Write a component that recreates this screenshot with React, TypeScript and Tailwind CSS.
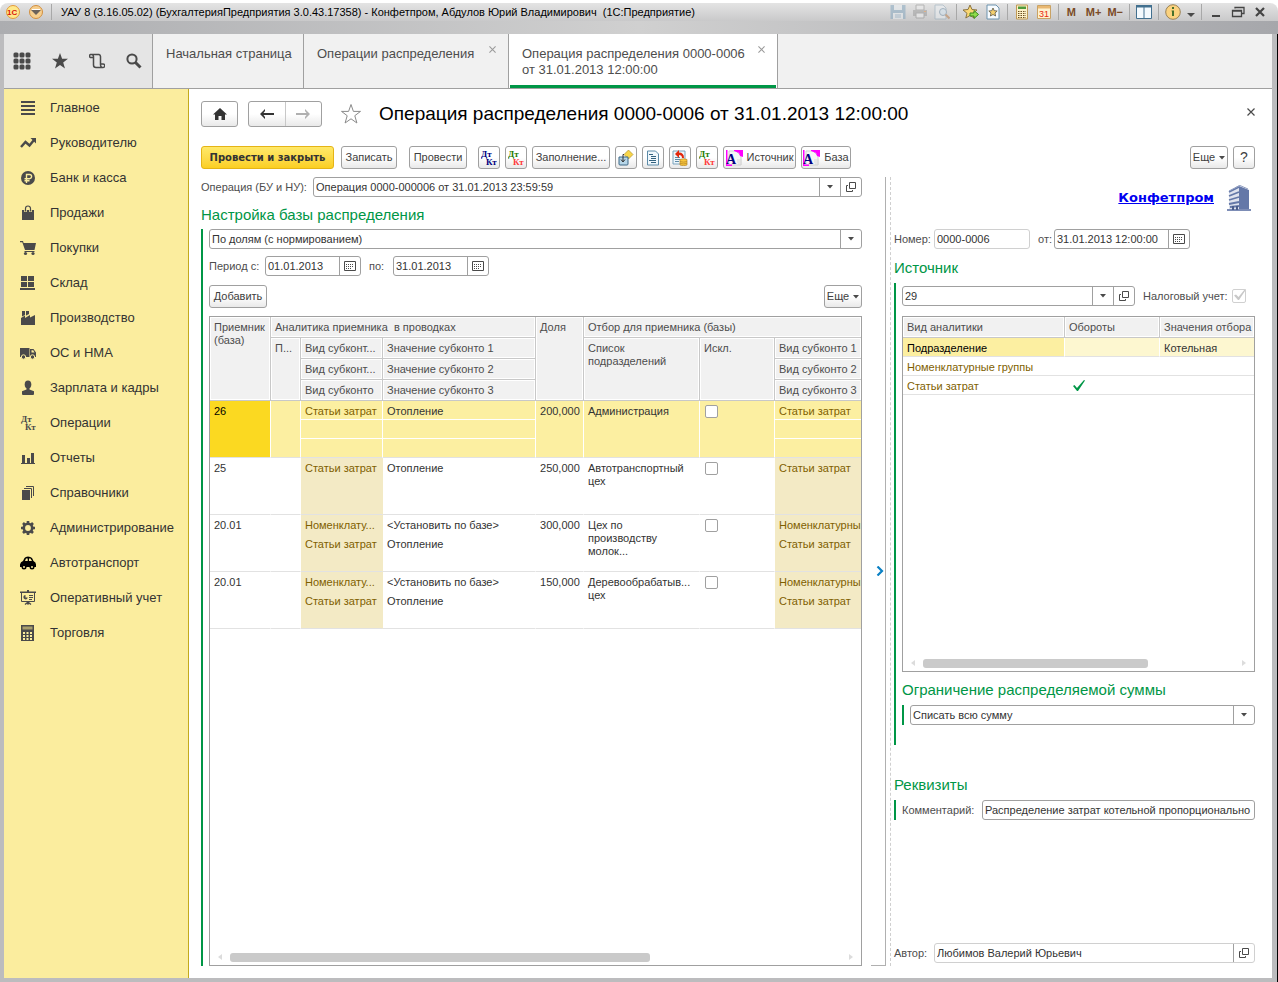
import type { ReactNode } from "react";
import { clsx } from "clsx";

/* ---------- icons ---------- */

function Icon({ size = 16, children, className }: { size?: number; children: ReactNode; className?: string }) {
  return (
    <svg width={size} height={size} viewBox="0 0 16 16" fill="currentColor" aria-hidden="true" className={clsx("shrink-0", className)}>
      {children}
    </svg>
  );
}

function DebitCredit({ top, bottom }: { top: string; bottom: string }) {
  return (
    <Icon>
      <g fontFamily="'Liberation Serif', serif" fontWeight="700" fontSize="9">
        <text x="0" y="7" fill={top}>Дт</text>
        <text x="5" y="15" fill={bottom}>Кт</text>
      </g>
    </Icon>
  );
}

function Caret() {
  return (
    <svg width="6" height="4" viewBox="0 0 6 4" fill="#4a4a4a" aria-hidden="true" className="shrink-0">
      <path d="M0 0h6L3 3.5z" />
    </svg>
  );
}

function OpenIcon() {
  return (
    <svg width="10" height="10" viewBox="0 0 10 10" fill="none" stroke="#4a4a4a" aria-hidden="true">
      <path d="M3.5.5h6v6h-6zM2 3.500H.5v6h6V8" />
    </svg>
  );
}

function CalendarIcon() {
  return (
    <svg width="12" height="11" viewBox="0 0 12 11" fill="none" stroke="#4a4a4a" aria-hidden="true">
      <path d="M.5.5h11v9H.5z" />
      <path d="M2 3.500h8M2 5.500h8M2 7.500h6" strokeDasharray="1 1" />
    </svg>
  );
}

function CloseIcon({ size = 7, color = "#9a9a9a" }: { size?: number; color?: string }) {
  return (
    <svg width={size} height={size} viewBox="0 0 8 8" stroke={color} strokeWidth="1.2" aria-hidden="true">
      <path d="M.5.5l7 7M7.500.5l-7 7" />
    </svg>
  );
}

function StylesheetIcon() {
  return (
    <svg width="17" height="16" viewBox="0 0 17 16" aria-hidden="true" className="shrink-0">
      <path d="M3 1h7l5 5v9H3z" fill="#f6f6f6" stroke="#cfcfcf" />
      <path d="M0 0h1.500v16H0zM0 14.500h6V16H0z" fill="#f0f" />
      <path d="M8 0h9v7l-3-1-1-3-5-2z" fill="#f0f" />
      <path d="M11 10h5M11 12h5M12 14h4" stroke="#d8d8d8" />
      <text x="0" y="14" fontFamily="'Liberation Serif', serif" fontWeight="700" fontSize="14" fill="#00007f">A</text>
    </svg>
  );
}

function BuildingIcon() {
  return (
    <svg width="26" height="26" viewBox="0 0 26 26" aria-hidden="true">
      <path d="M3 6L13 1v23H3z" fill="#dfe3ee" />
      <path d="M13 1l10 4v19H13z" fill="#6478a8" />
      <path d="M3 7l10-5M3 11l10-4M3 15l10-3M3 19l10-2M4 22l9-1" stroke="#6478a8" strokeWidth="1.800" />
      <path d="M3 6L13 .8l1 .4M9 3l5-2.500L22 4" fill="none" stroke="#8d9bbf" />
      <path d="M1 24h24v2H1z" fill="#7d8db6" />
      <path d="M6 21h2v4H6zM10 21h2v4h-2z" fill="#4a5d8c" />
    </svg>
  );
}

const nav: { label: string; icon: ReactNode; black?: boolean }[] = [
  { label: "Главное", icon: <path d="M1 1h14v2H1zM1 5h14v2H1zM1 9h14v2H1zM1 13h14v2H1z" /> },
  {
    label: "Руководителю",
    icon: (
      <>
        <path d="M1 12l4.500-5 4 3.500L14 5" fill="none" stroke="currentColor" strokeWidth="2.400" />
        <path d="M10.500 3H16v5.500z" />
      </>
    ),
  },
  {
    label: "Банк и касса",
    icon: (
      <>
        <circle cx="8" cy="8" r="7" />
        <path d="M6.500 13V4.500h3a2 2 0 0 1 0 4.200H4.500M4.500 10.700h5" fill="none" stroke="#fbed9e" strokeWidth="1.400" />
      </>
    ),
  },
  {
    label: "Продажи",
    icon: (
      <>
        <path d="M2 5h12v10H2z" />
        <path d="M5.500 7V3.500a2.500 2.500 0 0 1 5 0V7" fill="none" stroke="#fbed9e" strokeWidth="2.600" />
        <path d="M5.500 6.500v-3a2.500 2.500 0 0 1 5 0v3" fill="none" stroke="currentColor" strokeWidth="1.200" />
      </>
    ),
  },
  {
    label: "Покупки",
    icon: (
      <>
        <path d="M0 1h3l.6 2H16l-1.500 7H5L2.300 2.200H0zM4.500 11h10v1h-10z" />
        <circle cx="5.500" cy="13.500" r="1.600" />
        <circle cx="13" cy="13.500" r="1.600" />
      </>
    ),
  },
  { label: "Склад", icon: <path d="M1 1h6v5H1zM8 1h6v5H8zM1 7h6v5H1zM8 7h6v5H8zM0 13h15v2H0z" /> },
  { label: "Производство", icon: <path d="M1 15V8l4-2.500V8l5-3v2.500L15 5v10zM2 1h3v4L2 6.500zM6 1h3v3L6 5.500z" /> },
  {
    label: "ОС и НМА",
    icon: (
      <>
        <path d="M0 3h9.500v9H0zM10 4h3.500L16 7.500V12h-6z" />
        <path d="M11.500 5.300h1.700l1.300 2.200h-3z" fill="#fbed9e" />
        <circle cx="3.500" cy="12" r="2.200" stroke="#fbed9e" />
        <circle cx="12.500" cy="12" r="2.200" stroke="#fbed9e" />
      </>
    ),
  },
  {
    label: "Зарплата и кадры",
    icon: (
      <>
        <ellipse cx="8" cy="4.500" rx="3.300" ry="4" />
        <path d="M6.500 7h3v2.500l4.500 1.700V14q0 1-1 1H3q-1 0-1-1v-2.800l4.500-1.700z" />
      </>
    ),
  },
  {
    label: "Операции",
    icon: (
      <g fontFamily="'Liberation Serif', serif" fontWeight="700" fontSize="9">
        <text x="1" y="7">Дт</text>
        <text x="5" y="15">Кт</text>
      </g>
    ),
  },
  { label: "Отчеты", icon: <path d="M1 13h14v1H1zM2 5h3v8H2zM7 8h3v5H7zM11 3h3v10h-3z" /> },
  {
    label: "Справочники",
    icon: (
      <>
        <path d="M2 5h8v10H2z" />
        <path d="M4 3.500h7.500V13M6 1.500h7.500V11" fill="none" stroke="currentColor" />
      </>
    ),
  },
  {
    label: "Администрирование",
    icon: (
      <>
        <circle cx="8" cy="8" r="4.200" fill="none" stroke="currentColor" strokeWidth="2.600" />
        <path d="M8 1v3M8 12v3M1 8h3M12 8h3M3 3l2 2M11 11l2 2M13 3l-2 2M5 11l-2 2" stroke="currentColor" strokeWidth="2.600" />
      </>
    ),
  },
  {
    label: "Автотранспорт",
    black: true,
    icon: (
      <>
        <path d="M3 6l1.500-3Q5.500 1.500 8 1.500t4 1.500L13.500 6Q16 7 16 9.500V12H0V9.500Q.5 6.500 3 6z" />
        <path d="M5 6l1-2.500h1.700V6zM9 3.500h1.500L12 6H9z" fill="#fbed9e" />
        <circle cx="4" cy="12" r="2.500" />
        <circle cx="12" cy="12" r="2.500" />
        <circle cx="4" cy="12" r="1" fill="#fbed9e" />
        <circle cx="12" cy="12" r="1" fill="#fbed9e" />
      </>
    ),
  },
  {
    label: "Оперативный учет",
    icon: (
      <>
        <path d="M0 1.500h16V3H0zM7 0h2v2H7zM7 12h2v2.500H7z" />
        <path d="M1.500 3v8.500h13V3" fill="none" stroke="currentColor" />
        <path d="M5 14.500l2.500-2M11 14.500l-2.500-2" stroke="currentColor" strokeWidth="1.400" />
        <path d="M5.500 5a2.200 2.200 0 1 0 2.200 2.500H5.500z" />
        <path d="M9 5.500h4M9 7.500h4M9 9.500h3" stroke="currentColor" />
      </>
    ),
  },
  {
    label: "Торговля",
    icon: (
      <>
        <path d="M1 0h13v16H1z" />
        <path d="M2.500 1.500h10v3h-10z" fill="#a89f6c" />
        <path d="M3 7h2v2H3zM6.500 7h2v2h-2zM10 7h2v2h-2zM3 10h2v2H3zM6.500 10h2v2h-2zM10 10h2v2h-2zM3 13h2v2H3zM6.500 13h2v2h-2zM10 13h2v2h-2z" fill="#fbed9e" />
      </>
    ),
  },
];

/* ---------- controls ---------- */

function Button({ children, label, className }: { children: ReactNode; label?: string; className?: string }) {
  return (
    <button
      type="button"
      aria-label={label}
      className={clsx(
        "flex h-[23px] shrink-0 items-center justify-center gap-1 rounded-[3px] border border-[#a0a0a0] bg-linear-to-b from-white from-50% to-[#e9e9e9] whitespace-nowrap text-[#404040]",
        className,
      )}
    >
      {children}
    </button>
  );
}

function Addon({ label, children }: { label: string; children: ReactNode }) {
  return (
    <button type="button" aria-label={label} className="flex w-[21px] shrink-0 items-center justify-center border-l border-[#a0a0a0]">
      {children}
    </button>
  );
}

type FieldProps = { id: string; value: string; label?: string; light?: boolean; className?: string; children?: ReactNode };

function Field({ id, value, label, light, className, children }: FieldProps) {
  return (
    <div className={clsx("flex h-5 min-w-0 overflow-hidden rounded-[3px] border bg-white", light ? "border-[#d0d0d0]" : "border-[#a0a0a0]", className)}>
      <input id={id} aria-label={label} defaultValue={value} className="w-full min-w-0 flex-1 px-[2px] text-[#333] outline-none" />
      {children}
    </div>
  );
}

function Dropdown({ id, value, label }: { id: string; value: string; label: string }) {
  return (
    <div className="relative flex h-5 w-full rounded-[3px] border border-[#a0a0a0] bg-white">
      <select id={id} aria-label={label} className="w-full appearance-none px-[2px] text-[#333] outline-none">
        <option>{value}</option>
      </select>
      <span className="pointer-events-none absolute inset-y-0 right-0 flex w-[21px] items-center justify-center border-l border-[#a0a0a0]">
        <Caret />
      </span>
    </div>
  );
}

function Heading({ children, className }: { children: ReactNode; className?: string }) {
  return <h2 className={clsx("text-[15px] leading-5 text-[#009646]", className)}>{children}</h2>;
}

function ScrollBar({ thumb }: { thumb: string }) {
  return (
    <div className="mt-auto flex h-4 items-center gap-2 px-2">
      <svg width="4" height="6" viewBox="0 0 4 6" fill="#dcdcdc" aria-hidden="true"><path d="M4 0v6L0 3z" /></svg>
      <div className="flex-1">
        <div className={clsx("h-[9px] rounded-[3px] bg-[#cacaca]", thumb)} />
      </div>
      <svg width="4" height="6" viewBox="0 0 4 6" fill="#dcdcdc" aria-hidden="true"><path d="M0 0v6l4-3z" /></svg>
    </div>
  );
}

/* ---------- window chrome ---------- */

function Divider() {
  return <span className="h-4 w-px bg-[#a8a8a8]" />;
}

function TitleBar() {
  return (
    <header className="bg-white pt-[3px]">
      <div className="flex h-[18px] items-center rounded-t-lg bg-linear-to-b from-[#e4e4e4] to-[#c9c9ca] pr-[10px] pl-[6px]">
        <svg width="14" height="14" viewBox="0 0 14 14" aria-hidden="true">
          <circle cx="7" cy="7" r="6.500" fill="#ffe98a" stroke="#e39a3c" />
          <text x="1" y="10" fontFamily="'Liberation Sans', sans-serif" fontWeight="700" fontSize="8" fill="#d8130c">1С</text>
        </svg>
        <svg width="14" height="14" viewBox="0 0 14 14" aria-hidden="true" className="ml-[9px]">
          <circle cx="7" cy="7" r="6.500" fill="#f7cf8e" stroke="#d18f3f" />
          <path d="M2 5h10L7 10z" fill="#6b625a" />
          <path d="M3 4.500h8" stroke="#fff" />
        </svg>
        <span className="ml-2 h-4 w-px bg-[#a8a8a8]" />
        <h1 className="ml-[9px] text-[11px] whitespace-pre text-black">
          УАУ 8 (3.16.05.02) (БухгалтерияПредприятия 3.0.43.17358) - Конфетпром, Абдулов Юрий Владимирович  (1С:Предприятие)
        </h1>
        <div className="ml-auto flex items-center gap-[6px] text-[11px] font-bold text-[#7a4a25]">
          <button type="button" aria-label="Сохранить">
            <Icon className="opacity-50">
              <path d="M.5 1h15v14H.5z" fill="#7fa3bd" />
              <path d="M4 1h8v5H4zM3 9h10v6H3z" fill="#e9eef2" />
              <path d="M5 11h6M5 13h6" stroke="#7fa3bd" />
            </Icon>
          </button>
          <button type="button" aria-label="Печать">
            <Icon className="opacity-50">
              <path d="M4 1h8v5H4z" fill="#eee" stroke="#8a8a8a" />
              <path d="M1 6h14v6H1z" fill="#9a9a9a" />
              <path d="M4 9h8v5H4z" fill="#f2f2f2" stroke="#8a8a8a" />
              <path d="M12 7h2v1h-2z" fill="#e48a3a" />
            </Icon>
          </button>
          <button type="button" aria-label="Просмотр">
            <Icon className="opacity-50">
              <path d="M1 1h8l3 3v11H1z" fill="#eef2f5" stroke="#8fa9bb" />
              <circle cx="9" cy="8" r="3.500" fill="#d5e6f2" stroke="#6f8da5" />
              <path d="M11.500 10.500l4 4" stroke="#b97a45" strokeWidth="2" />
            </Icon>
          </button>
          <Divider />
          <button type="button" aria-label="Добавить в избранное">
            <Icon>
              <path d="M7 1l2 4.500 5 .5-4 3.300L11.200 14 7 11.500 2.800 14 4 9.300 0 6l5-.5z" fill="#fbd774" stroke="#8b7440" />
              <path d="M7 9h4V6.500l4.500 4-4.500 4V12H7z" fill="#8fdc4a" stroke="#3c8a1e" />
            </Icon>
          </button>
          <button type="button" aria-label="Избранное">
            <Icon>
              <path d="M2 1h9l3 3v11H2z" fill="#f7fbfe" stroke="#6d93ae" />
              <path d="M8 4l1.200 2.700 3 .3-2.200 2 .6 3L8 10.500 5.400 12 6 9 3.800 7l3-.3z" fill="#f5d06f" stroke="#5c5542" strokeWidth=".8" />
            </Icon>
          </button>
          <Divider />
          <button type="button" aria-label="Калькулятор">
            <Icon>
              <path d="M2.500 1h11v14h-11z" fill="#fdf1c8" stroke="#c09a55" />
              <path d="M4 2.500h8v2.500H4z" fill="#4f9a3a" />
              <path d="M4 7.500h8M4 9.500h8M4 11.500h8M4 13.500h8" stroke="#6d5022" strokeDasharray="1.500 1" />
            </Icon>
          </button>
          <button type="button" aria-label="Календарь">
            <Icon>
              <path d="M1.500 1.500h13v13h-13z" fill="#fff2cf" stroke="#c9a264" />
              <path d="M2 2h12v2.500H2z" fill="#e9b872" />
              <text x="3" y="13" fontFamily="'Liberation Sans', sans-serif" fontSize="9" fontWeight="400" fill="#e8280f">31</text>
            </Icon>
          </button>
          <Divider />
          <button type="button" className="ml-[2px]">M</button>
          <button type="button" className="ml-1">M+</button>
          <button type="button">M−</button>
          <Divider />
          <button type="button" aria-label="Панели">
            <Icon>
              <path d="M.5 1.500h15v13H.5z" fill="#f4fafe" stroke="#42708f" />
              <path d="M0 1h16v2.500H0z" fill="#42708f" />
              <path d="M8 3v12" stroke="#42708f" />
            </Icon>
          </button>
          <Divider />
          <button type="button" aria-label="О программе" className="flex items-center gap-[6px]">
            <Icon>
              <circle cx="8" cy="8" r="7.300" fill="#fbd27f" stroke="#9a8256" />
              <path d="M7 3h2v2H7zM6.500 6.500H9V12H7V8z" fill="#47702c" />
            </Icon>
            <svg width="8" height="10" viewBox="0 0 8 10" fill="#4a4a4a" aria-hidden="true"><path d="M0 6h8l-4 4z" /></svg>
          </button>
          <Divider />
          <button type="button" aria-label="Свернуть" className="w-4">
            <Icon><path d="M4 11h8v2H4z" fill="#444" /></Icon>
          </button>
          <button type="button" aria-label="Восстановить" className="w-4">
            <Icon>
              <path d="M5 4.500V3.500h9v6h-2M2.500 6.500h9v6h-9zM2 7.200h10" fill="none" stroke="#444" strokeWidth="1.300" />
            </Icon>
          </button>
          <button type="button" aria-label="Закрыть окно" className="w-4">
            <Icon><path d="M4 4l8 8M12 4l-8 8" stroke="#444" strokeWidth="2.200" /></Icon>
          </button>
        </div>
      </div>
      <div className="h-[13px] bg-linear-to-r from-[#acadb0] via-[#d0d0d0] to-[#a6a7ab]" />
    </header>
  );
}

function TabBar() {
  return (
    <div className="flex h-[55px] border-b border-[#a0a0a0] bg-[#f1f1f1] text-[13px] leading-4 text-[#4d4d4d]">
      <div className="flex w-[149px] items-center gap-[21px] border-r border-[#a0a0a0] bg-[#e5e5e5] pl-[9px] text-[#4a4a4a]">
        <button type="button" aria-label="Меню">
          <svg width="18" height="18" viewBox="0 0 18 18" fill="currentColor" aria-hidden="true">
            {[0, 6, 12].map((y) => [0, 6, 12].map((x) => <rect key={`${x}-${y}`} x={x + 0.5} y={y + 0.5} width="5" height="5" rx="1.500" />))}
          </svg>
        </button>
        <button type="button" aria-label="Избранное">
          <Icon><path d="M8 0l2.100 5.800H16l-4.800 3.700L13 15.500 8 12l-5 3.500 1.800-6L0 5.800h5.900z" /></Icon>
        </button>
        <button type="button" aria-label="История">
          <Icon>
            <path d="M4 4.500H1.500a1.600 1.600 0 0 1 0-3H10a2 2 0 0 1 1.500 2V11H14a1.700 1.700 0 0 1 0 3.500H7A2.500 2.500 0 0 1 4.500 12V3.500q0-1.500-1.500-2M11.500 11v1q0 1.500 1.500 2.500" fill="none" stroke="currentColor" strokeWidth="1.500" />
          </Icon>
        </button>
        <button type="button" aria-label="Поиск">
          <Icon>
            <circle cx="6" cy="6" r="4.600" fill="none" stroke="currentColor" strokeWidth="2" />
            <path d="M9.500 9.500l5 5" stroke="currentColor" strokeWidth="3" />
          </Icon>
        </button>
      </div>
      <div className="flex w-[151px] shrink-0 border-r border-[#a0a0a0] pt-3 pl-[13px]">
        <a href="#home" className="whitespace-nowrap">Начальная страница</a>
      </div>
      <div className="flex w-[205px] shrink-0 items-start justify-between border-r border-[#a0a0a0] pt-3 pr-3 pl-[13px]">
        <a href="#list" className="whitespace-nowrap">Операции распределения</a>
        <button type="button" aria-label="Закрыть вкладку"><CloseIcon /></button>
      </div>
      <div className="flex w-[269px] shrink-0 border-r border-[#a0a0a0] bg-white px-px">
        <div className="flex w-full items-start justify-between border-b-3 border-[#009646] pt-3 pr-[11px] pl-3">
          <a href="#operation">
            Операция распределения 0000-0006
            <br />
            от 31.01.2013 12:00:00
          </a>
          <button type="button" aria-label="Закрыть вкладку"><CloseIcon /></button>
        </div>
      </div>
    </div>
  );
}

function Sidebar() {
  return (
    <nav className="w-[185px] shrink-0 border-r border-[#c3aa1c] bg-[#fbed9e] text-[13px] text-[#333]">
      {nav.map((item) => (
        <a key={item.label} href="#section" className="flex h-[35px] items-center gap-[14px] pt-[2px] pl-4 whitespace-nowrap">
          <Icon className={item.black ? "text-black" : "text-[#4a4a4a]"}>{item.icon}</Icon>
          {item.label}
        </a>
      ))}
    </nav>
  );
}

/* ---------- form ---------- */

function Toolbar() {
  return (
    <div className="mt-[19px] flex gap-[5px]">
      <button
        type="button"
        className="h-[23px] w-[133px] shrink-0 rounded-[3px] border border-[#e5b416] bg-linear-to-b from-[#ffe968] to-[#fbcf1f] font-['DejaVu_Sans',sans-serif] text-[10px] font-bold whitespace-nowrap text-[#333]"
      >
        Провести и закрыть
      </button>
      <Button className="ml-[2px] w-[56px]">Записать</Button>
      <Button className="ml-[7px] w-[58px]">Провести</Button>
      <Button label="Проводки" className="ml-[6px] w-[22px]"><DebitCredit top="#00007f" bottom="#00007f" /></Button>
      <Button label="Проводки БУ и НУ" className="w-[22px]"><DebitCredit top="#1f7a00" bottom="#ff3a3a" /></Button>
      <Button className="w-[78px]">Заполнение...</Button>
      <Button label="Ввести на основании" className="w-[22px]">
        <Icon>
          <path d="M10.500 0L15 4.500 10.500 9 6 4.500z" fill="#f8d548" stroke="#b3922d" strokeWidth=".7" />
          <path d="M1 7h9v7q0 1-1 1H2q-1 0-1-1z" fill="#b7d6e8" stroke="#3b6786" />
          <path d="M6 4.500H5V11M3 9.500l2 2.500 2-2.500" fill="none" stroke="#333" />
        </Icon>
      </Button>
      <Button label="Отчет" className="w-[22px]">
        <Icon>
          <path d="M2.500 1h8l3 3v11h-11z" fill="#eff7fc" stroke="#5c8ba8" />
          <path d="M4 4.500h4M6 6.500h5M6 8.500h5M4 10.500h7M6 12.500h5" stroke="#33627f" />
        </Icon>
      </Button>
      <Button label="Движения документа" className="w-[22px]">
        <Icon>
          <path d="M1 1h12v13H1z" fill="#eef6fb" stroke="#7ba3bd" />
          <path d="M3 7.500h5M3 9.500h5M3 11.500h4" stroke="#5c8ba8" />
          <path d="M3 4l4-4v2.500q5 0 5 5.500h-2q0-3-3-3v3z" fill="#e2280d" />
          <path d="M8 9.500q3.500-1.500 7 0V15q-3.500 1.500-7 0z" fill="#f9c63a" stroke="#b5852a" strokeWidth=".7" />
          <path d="M8 11.500q3.500 1.300 7 0M8 13.300q3.500 1.300 7 0" fill="none" stroke="#b5852a" strokeWidth=".7" />
        </Icon>
      </Button>
      <Button label="Дт Кт" className="w-[22px]"><DebitCredit top="#1f7a00" bottom="#ff3a3a" /></Button>
      <Button className="w-[73px]"><StylesheetIcon />Источник</Button>
      <Button className="w-[50px]"><StylesheetIcon />База</Button>
      <Button className="ml-auto w-[38px]">Еще<Caret /></Button>
      <Button label="Справка" className="w-[22px] text-[14px]">?</Button>
    </div>
  );
}

type Row = {
  code: string;
  kinds: string[];
  filters: string[];
  values: string[];
  share: string;
  dept: string[];
  active?: boolean;
};

const rows: Row[] = [
  { code: "26", kinds: ["Статьи затрат"], filters: ["Статьи затрат"], values: ["Отопление"], share: "200,000", dept: ["Администрация"], active: true },
  { code: "25", kinds: ["Статьи затрат"], filters: ["Статьи затрат"], values: ["Отопление"], share: "250,000", dept: ["Автотранспортный", "цех"] },
  {
    code: "20.01",
    kinds: ["Номенклату...", "Статьи затрат"],
    filters: ["Номенклатурны", "Статьи затрат"],
    values: ["<Установить по базе>", "Отопление"],
    share: "300,000",
    dept: ["Цех по", "производству", "молок..."],
  },
  {
    code: "20.01",
    kinds: ["Номенклату...", "Статьи затрат"],
    filters: ["Номенклатурны", "Статьи затрат"],
    values: ["<Установить по базе>", "Отопление"],
    share: "150,000",
    dept: ["Деревообрабатыв...", "цех"],
  },
];

const th = "h-[21px] border-b border-r border-[#c8c8c8] bg-[#f1f1f1] pl-1 pt-1 text-left align-top font-normal leading-[13px] text-[#4d4d4d] shadow-[inset_0_0_0_1px_#fff]";
const td = "h-[19px] border-r pt-1 pl-1 align-top leading-[13px] whitespace-nowrap";

function BaseRow({ row }: { row: Row }) {
  const bg = row.active ? "bg-[#fcefa1] border-r-white" : "border-r-transparent";
  const kindBg = row.active ? "bg-[#fcefa1] border-r-white" : "bg-[#f3eac5] border-r-[#f3eac5]";
  const end = "border-b border-b-[#e2e2e2]";
  const line = (i: number) => (i === 2 ? end : row.active ? "border-b border-b-white" : "border-b border-b-transparent");

  return (
    <>
      {[0, 1, 2].map((i) => (
        <tr key={i}>
          {i === 0 && (
            <>
              <td rowSpan={3} className={clsx(td, end, row.active ? "border-r-white bg-[#fbd921] text-black" : bg)}>{row.code}</td>
              <td rowSpan={3} className={clsx(td, end, bg)} />
            </>
          )}
          <td className={clsx(td, line(i), kindBg, "text-[#7f5f00]")}>{row.kinds[i]}</td>
          <td className={clsx(td, line(i), bg)}>{row.values[i]}</td>
          {i === 0 && (
            <>
              <td rowSpan={3} className={clsx(td, end, bg)}>{row.share}</td>
              <td rowSpan={3} className={clsx(td, end, bg)}>
                {row.dept.map((part) => <div key={part}>{part}</div>)}
              </td>
              <td rowSpan={3} className={clsx(td, end, bg)}>
                <input type="checkbox" aria-label="Искл." className="ml-px block size-[13px] appearance-none rounded-[2px] border border-[#a0a0a0] bg-white" />
              </td>
            </>
          )}
          <td className={clsx(td, line(i), kindBg, "border-r-0 text-[#7f5f00]")}>{row.filters[i]}</td>
        </tr>
      ))}
    </>
  );
}

function BaseTable() {
  return (
    <div className="mt-2 flex flex-1 flex-col border border-[#a0a0a0]">
      <table className="w-full table-fixed border-separate border-spacing-0 text-[#333]">
        <colgroup>
          <col className="w-[61px]" />
          <col className="w-[30px]" />
          <col className="w-[82px]" />
          <col className="w-[153px]" />
          <col className="w-[48px]" />
          <col className="w-[116px]" />
          <col className="w-[75px]" />
          <col />
        </colgroup>
        <thead>
          <tr>
            <th rowSpan={4} className={th}>Приемник (база)</th>
            <th colSpan={3} className={clsx(th, "whitespace-pre")}>Аналитика приемника  в проводках</th>
            <th rowSpan={4} className={th}>Доля</th>
            <th colSpan={3} className={clsx(th, "border-r-0")}>Отбор для приемника (базы)</th>
          </tr>
          <tr>
            <th rowSpan={3} className={th}>П...</th>
            <th className={clsx(th, "whitespace-nowrap")}>Вид субконт...</th>
            <th className={th}>Значение субконто 1</th>
            <th rowSpan={3} className={th}>Список<br />подразделений</th>
            <th rowSpan={3} className={th}>Искл.</th>
            <th className={clsx(th, "border-r-0 whitespace-nowrap")}>Вид субконто 1</th>
          </tr>
          <tr>
            <th className={clsx(th, "whitespace-nowrap")}>Вид субконт...</th>
            <th className={th}>Значение субконто 2</th>
            <th className={clsx(th, "border-r-0 whitespace-nowrap")}>Вид субконто 2</th>
          </tr>
          <tr>
            <th className={clsx(th, "whitespace-nowrap")}>Вид субконто</th>
            <th className={th}>Значение субконто 3</th>
            <th className={clsx(th, "border-r-0 whitespace-nowrap")}>Вид субконто 3</th>
          </tr>
        </thead>
        <tbody>
          {rows.map((row, i) => <BaseRow key={i} row={row} />)}
        </tbody>
      </table>
      <ScrollBar thumb="w-[420px]" />
    </div>
  );
}

function SourceTable() {
  const cell = "h-[19px] border-b border-[#e2e2e2] px-1 pt-1 align-top leading-[13px] whitespace-nowrap";
  return (
    <div className="mt-[10px] flex h-[356px] flex-col border border-[#a0a0a0]">
      <table className="w-full table-fixed border-separate border-spacing-0 text-[#7f5f00]">
        <colgroup>
          <col className="w-[162px]" />
          <col className="w-[95px]" />
          <col />
        </colgroup>
        <thead>
          <tr>
            <th className={th}>Вид аналитики</th>
            <th className={th}>Обороты</th>
            <th className={clsx(th, "border-r-0 whitespace-nowrap")}>Значения отбора</th>
          </tr>
        </thead>
        <tbody>
          <tr>
            <td className={clsx(cell, "border-r border-r-white bg-[#fcefa1] text-black")}>Подразделение</td>
            <td className={clsx(cell, "border-r border-r-white bg-[#fdf7d0]")} />
            <td className={clsx(cell, "bg-[#fdf7d0] text-[#333]")}>Котельная</td>
          </tr>
          <tr>
            <td className={cell}>Номенклатурные группы</td>
            <td className={cell} />
            <td className={cell} />
          </tr>
          <tr>
            <td className={cell}>Статьи затрат</td>
            <td className={cell}>
              <svg width="12" height="12" viewBox="0 0 12 12" role="img" aria-label="Да" className="ml-1">
                <path d="M0 6l1.500-1L4 8 11 0l1 .5L5 11H4z" fill="#009646" />
              </svg>
            </td>
            <td className={cell} />
          </tr>
        </tbody>
      </table>
      <ScrollBar thumb="w-[225px]" />
    </div>
  );
}

function LeftPane() {
  return (
    <section className="flex min-w-0 flex-1 flex-col">
      <div className="flex items-center">
        <label htmlFor="operation" className="w-[112px] shrink-0 whitespace-nowrap">Операция (БУ и НУ):</label>
        <Field id="operation" value="Операция 0000-000006 от 31.01.2013 23:59:59" className="flex-1">
          <Addon label="Выбрать операцию"><Caret /></Addon>
          <Addon label="Открыть операцию"><OpenIcon /></Addon>
        </Field>
      </div>
      <Heading className="mt-2">Настройка базы распределения</Heading>
      <div className="mt-1 flex flex-1 flex-col border-l-2 border-[#009646] pl-[6px]">
        <Dropdown id="method" label="Способ распределения" value="По долям (с нормированием)" />
        <div className="mt-[7px] flex items-center">
          <label htmlFor="from" className="w-[56px]">Период с:</label>
          <Field id="from" value="01.01.2013" className="w-24">
            <Addon label="Календарь"><CalendarIcon /></Addon>
          </Field>
          <label htmlFor="to" className="ml-2 w-6">по:</label>
          <Field id="to" value="31.01.2013" className="w-24">
            <Addon label="Календарь"><CalendarIcon /></Addon>
          </Field>
        </div>
        <div className="mt-[9px] flex justify-between">
          <Button className="w-[58px]">Добавить</Button>
          <Button className="w-[38px]">Еще<Caret /></Button>
        </div>
        <BaseTable />
      </div>
    </section>
  );
}

function RightPane() {
  return (
    <section className="flex w-[361px] shrink-0 flex-col">
      <div className="flex items-center justify-end gap-3 pt-2 pr-[3px]">
        <a href="#company" className="font-['DejaVu_Sans',sans-serif] text-[13px] font-bold text-[#0000f0] underline">Конфетпром</a>
        <BuildingIcon />
      </div>
      <div className="mt-[18px] flex items-center">
        <label htmlFor="number" className="w-10">Номер:</label>
        <Field id="number" value="0000-0006" light className="w-24" />
        <label htmlFor="date" className="ml-2 w-4 whitespace-nowrap">от:</label>
        <Field id="date" value="31.01.2013 12:00:00" className="w-[136px]">
          <Addon label="Календарь"><CalendarIcon /></Addon>
        </Field>
      </div>
      <Heading className="mt-[9px]">Источник</Heading>
      <div className="mt-[5px] border-l-2 border-[#009646] pt-[3px] pb-5 pl-[6px]">
        <div className="flex items-center">
          <Field id="account" label="Счет" value="29" className="w-[233px]">
            <Addon label="Выбрать счет"><Caret /></Addon>
            <Addon label="Открыть счет"><OpenIcon /></Addon>
          </Field>
          <label className="ml-2 flex items-center gap-1 whitespace-nowrap">
            Налоговый учет:
            <span className="relative flex">
              <input type="checkbox" defaultChecked disabled className="size-[14px] appearance-none rounded-[2px] border border-[#d0d0d0]" />
              <svg width="12" height="12" viewBox="0 0 12 12" fill="#c8c8c8" aria-hidden="true" className="absolute top-0 left-[2px]">
                <path d="M0 6.500l2-1 2.500 2.500L11 0l1 .5L5 11H4z" />
              </svg>
            </span>
          </label>
        </div>
        <SourceTable />
        <Heading className="mt-2">Ограничение распределяемой суммы</Heading>
        <div className="mt-[5px] border-l-2 border-[#009646] pl-[6px]">
          <Dropdown id="limit" label="Ограничение распределяемой суммы" value="Списать всю сумму" />
        </div>
      </div>
      <Heading className="mt-[30px]">Реквизиты</Heading>
      <div className="mt-[5px] flex items-center border-l-2 border-[#009646] pl-[6px]">
        <label htmlFor="comment" className="w-20">Комментарий:</label>
        <Field id="comment" value="Распределение затрат котельной пропорционально" className="flex-1" />
      </div>
      <div className="mt-auto mb-[3px] flex items-center">
        <label htmlFor="author" className="w-10">Автор:</label>
        <Field id="author" value="Любимов Валерий Юрьевич" light className="flex-1">
          <Addon label="Открыть автора"><OpenIcon /></Addon>
        </Field>
      </div>
    </section>
  );
}

export default function App() {
  return (
    <div className="flex min-h-screen flex-col bg-[#bcbcbe] font-['Liberation_Sans',Arial,sans-serif] text-[11px] text-[#4d4d4d]">
      <TitleBar />
      <div className="flex flex-1 flex-col border-r border-black">
        <div className="mr-[5px] mb-1 ml-1 flex flex-1 flex-col bg-white">
          <TabBar />
          <div className="flex flex-1">
            <Sidebar />
            <main className="flex min-w-0 flex-1 flex-col pt-3 pr-[17px] pb-3 pl-3">
              <div className="flex items-center">
                <Button label="Домой" className="h-[26px] w-[37px]">
                  <Icon className="text-[#333]"><path d="M8 2l7 6.500h-2V14H9.500v-4h-3v4H3V8.500H1z" /></Icon>
                </Button>
                <div className="ml-[10px] flex h-[26px] w-[74px] divide-x divide-[#c8c8c8] rounded-[3px] border border-[#a0a0a0] bg-linear-to-b from-white from-50% to-[#e9e9e9]">
                  <button type="button" aria-label="Назад" className="flex flex-1 items-center justify-center text-[#333]">
                    <Icon><path d="M6 3L1 8l5 5v-2L4.500 9H15V7H4.500L6 5z" /></Icon>
                  </button>
                  <button type="button" aria-label="Вперед" className="flex flex-1 items-center justify-center text-[#b0b0b0]">
                    <Icon><path d="M10 3l5 5-5 5v-2l1.500-2H1V7h10.500L10 5z" /></Icon>
                  </button>
                </div>
                <button type="button" aria-label="В избранное" className="ml-[18px]">
                  <svg width="22" height="22" viewBox="0 0 22 22" fill="#fff" stroke="#8a8a8a" aria-hidden="true">
                    <path d="M11 1.500l2.400 6.900h7.100l-5.700 4.300 2.100 7.300L11 15.800 5.100 20l2.100-7.300L1.500 8.400h7.100z" />
                  </svg>
                </button>
                <h1 className="ml-[17px] text-[19px] leading-6 whitespace-nowrap text-black">Операция распределения 0000-0006 от 31.01.2013 12:00:00</h1>
                <button type="button" aria-label="Закрыть" className="mb-1 ml-auto"><CloseIcon size={8} color="#4a4a4a" /></button>
              </div>
              <Toolbar />
              <div className="mt-2 flex flex-1">
                <LeftPane />
                <div className="ml-[9px] flex w-[15px] items-center justify-end border-r border-b border-r-[#b0b0b0] border-b-[#b0b0b0] pr-px">
                  <button type="button" aria-label="Свернуть панель">
                    <svg width="8" height="10" viewBox="0 0 8 10" fill="none" stroke="#0a80c4" strokeWidth="2.200" aria-hidden="true">
                      <path d="M1.500.5L6 5 1.500 9.500" />
                    </svg>
                  </button>
                </div>
                <div className="mr-[3px] ml-1 border-l border-dashed border-[#cfcfcf]" />
                <RightPane />
              </div>
            </main>
          </div>
        </div>
      </div>
    </div>
  );
}
